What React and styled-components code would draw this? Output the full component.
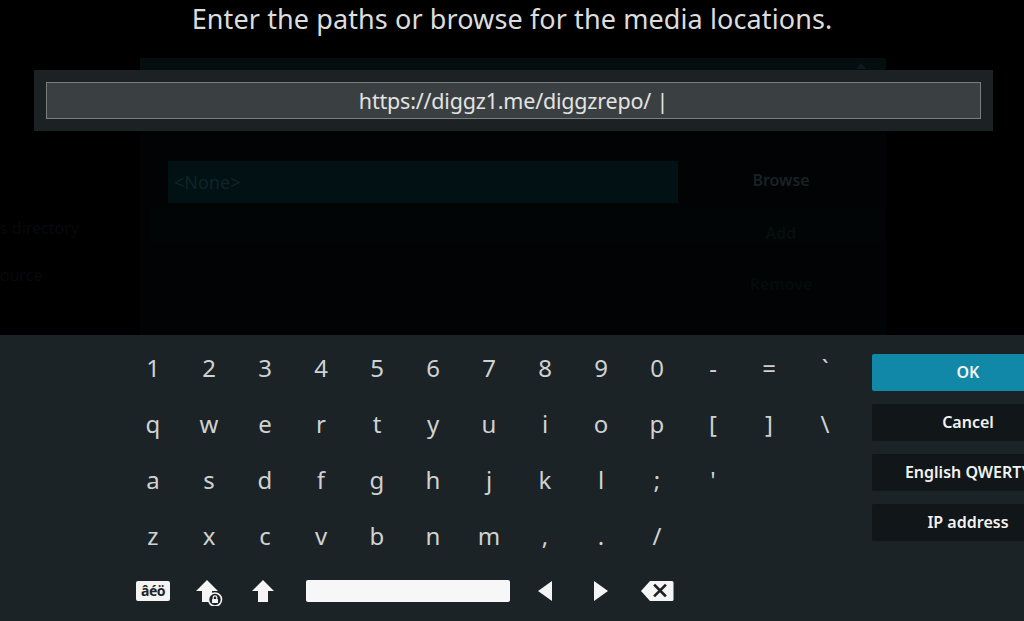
import React from "react";
import styled, { createGlobalStyle } from "styled-components";

const GlobalStyle = createGlobalStyle`
  html, body {
    margin: 0;
    padding: 0;
    background: #000;
  }
  body {
    font-family: "Noto Sans", "Open Sans", sans-serif;
  }
`;

// Screen
const Screen = styled.div`
  position: relative;
  width: 1024px;
  height: 621px;
  overflow: hidden;
  background: #000;
`;

// Dimmed window behind the keyboard
const Backdrop = styled.div`
  display: flex;
  height: 100%;
`;

const SideMenu = styled.div`
  width: 140px;
  padding-top: 216px;
  display: flex;
  flex-direction: column;
  gap: 23px;
`;

const SideLabel = styled.div`
  font-size: 16px;
  line-height: 24px;
  color: #060a0b;
  white-space: nowrap;
`;

const Dialog = styled.div`
  position: relative;
  margin-top: 58px;
  width: 746px;
  height: 320px;
  background: #010304;
  box-sizing: border-box;
  display: flex;
  flex-direction: column;
`;

const DialogHeader = styled.div`
  height: 12px;
  background: #050d0f;
`;

const ScrollMark = styled.div`
  position: absolute;
  right: 20px;
  top: 5px;
  width: 0;
  height: 0;
  border-left: 5px solid transparent;
  border-right: 5px solid transparent;
  border-bottom: 6px solid #101a1c;
`;

const DialogRow = styled.div`
  display: flex;
  align-items: center;
  height: ${(p) => p.$height}px;
  margin-top: ${(p) => p.$top || 0}px;
  margin-left: ${(p) => p.$left || 28}px;
  width: ${(p) => p.$width || 716}px;
  background: ${(p) => p.$bg || "transparent"};
`;

const PathField = styled.div`
  width: 510px;
  height: 42px;
  background: #021114;
  color: #11242a;
  font-size: 18px;
  line-height: 42px;
  padding-left: 6px;
  box-sizing: border-box;
`;

const DimAction = styled.div`
  margin-left: auto;
  width: 206px;
  text-align: center;
  font-size: 16px;
  font-weight: 600;
  color: ${(p) => p.$color || "#1b2527"};
  transform: translateY(${(p) => p.$shift || 0}px);
`;

// Keyboard overlay
const Overlay = styled.div`
  position: absolute;
  inset: 0;
  display: flex;
  flex-direction: column;
`;

const Title = styled.div`
  height: 38px;
  line-height: 38px;
  text-align: center;
  font-size: 27px;
  color: #dcdddd;
  letter-spacing: 0.1px;
`;

const InputPanel = styled.div`
  margin: 32px 31px 0 34px;
  height: 61px;
  padding: 12px;
  box-sizing: border-box;
  background: #1c2224;
`;

const InputBox = styled.div`
  height: 37px;
  box-sizing: border-box;
  border: 1px solid #7a7e7f;
  background: #3a3f41;
  color: #e2e3e3;
  font-size: 21.5px;
  line-height: 35px;
  text-align: center;
  letter-spacing: -0.2px;
`;

const Keyboard = styled.div`
  margin-top: auto;
  height: 286px;
  background: #1c2326;
  display: flex;
`;

const Keys = styled.div`
  padding: 4px 0 0 125px;
  display: flex;
  flex-direction: column;
`;

const KeyRow = styled.div`
  display: flex;
  height: 56px;
`;

const Key = styled.div`
  width: ${(p) => (p.$span || 1) * 56}px;
  height: 56px;
  display: flex;
  align-items: center;
  justify-content: center;
  font-size: 24px;
  color: #cfd2d3;
`;

const Accents = styled.div`
  width: 34px;
  height: 20px;
  border-radius: 2px;
  background: #f4f4f4;
  color: #1c2326;
  font-size: 14px;
  font-weight: 700;
  line-height: 20px;
  text-align: center;
  letter-spacing: -0.5px;
`;

const SpaceBar = styled.div`
  width: 204px;
  height: 22px;
  border-radius: 2px;
  background: #f7f7f7;
  margin-left: 6px;
`;

const Actions = styled.div`
  margin-left: 19px;
  padding-top: 19px;
  display: flex;
  flex-direction: column;
  gap: 13px;
`;

const ActionButton = styled.div`
  width: 192px;
  height: 37px;
  border-radius: 2px;
  background: ${(p) => (p.$focused ? "#1288a8" : "#111618")};
  color: #f2f2f2;
  font-size: 16px;
  font-weight: 600;
  line-height: 37px;
  text-align: center;
  white-space: nowrap;
`;

const ShiftArrow = ({ lock }) => (
  <svg width="30" height="30" viewBox="0 0 30 30">
    <path d="M13 4 L24 15 H18 V26 H8 V15 H2 Z" fill="#f5f5f5" />
    {lock && (
      <g>
        <circle cx="21" cy="23.5" r="6.5" fill="#1c2326" stroke="#f5f5f5" strokeWidth="1.6" />
        <rect x="18" y="23" width="6" height="4" rx="0.6" fill="#f5f5f5" />
        <path d="M19.2 23 V21.6 a1.8 1.8 0 0 1 3.6 0 V23" fill="none" stroke="#f5f5f5" strokeWidth="1.2" />
      </g>
    )}
  </svg>
);

const Arrow = ({ dir }) => (
  <svg width="16" height="22" viewBox="0 0 16 22">
    {dir === "left" ? (
      <path d="M15 1 V21 L1 11 Z" fill="#f5f5f5" />
    ) : (
      <path d="M1 1 V21 L15 11 Z" fill="#f5f5f5" />
    )}
  </svg>
);

const Backspace = () => (
  <svg width="34" height="22" viewBox="0 0 34 22">
    <path d="M10 1 H32 a1.5 1.5 0 0 1 1.5 1.5 V19.5 a1.5 1.5 0 0 1 -1.5 1.5 H10 L1 11 Z" fill="#f5f5f5" />
    <path d="M15 5.5 L25 15.5 M25 5.5 L15 15.5" stroke="#1c2326" strokeWidth="2.6" strokeLinecap="square" />
  </svg>
);

const rows = [
  ["1", "2", "3", "4", "5", "6", "7", "8", "9", "0", "-", "=", "`"],
  ["q", "w", "e", "r", "t", "y", "u", "i", "o", "p", "[", "]", "\\"],
  ["a", "s", "d", "f", "g", "h", "j", "k", "l", ";", "'"],
  ["z", "x", "c", "v", "b", "n", "m", ",", ".", "/"],
];

const actions = ["OK", "Cancel", "English QWERTY", "IP address"];

export default function App() {
  return (
    <Screen>
      <GlobalStyle />
      <Backdrop>
        <SideMenu>
          <SideLabel>s directory</SideLabel>
          <SideLabel>ource</SideLabel>
        </SideMenu>
        <Dialog>
          <DialogHeader />
          <ScrollMark />
          <DialogRow $height={42} $top={91}>
            <PathField>&lt;None&gt;</PathField>
            <DimAction $color="#182224" $shift={-2}>Browse</DimAction>
          </DialogRow>
          <DialogRow $height={34} $top={5} $left={10} $width={734} $bg="#020506">
            <DimAction $color="#070e10" $shift={8}>Add</DimAction>
          </DialogRow>
          <DialogRow $height={30} $top={36}>
            <DimAction $color="#050a0b" $shift={-9}>Remove</DimAction>
          </DialogRow>
        </Dialog>
      </Backdrop>

      <Overlay>
        <Title>Enter the paths or browse for the media locations.</Title>
        <InputPanel>
          <InputBox>https://diggz1.me/diggzrepo/ |</InputBox>
        </InputPanel>

        <Keyboard>
          <Keys>
            {rows.map((row, i) => (
              <KeyRow key={i}>
                {row.map((k) => (
                  <Key key={k}>{k}</Key>
                ))}
              </KeyRow>
            ))}
            <KeyRow>
              <Key>
                <Accents>âéö</Accents>
              </Key>
              <Key>
                <ShiftArrow lock />
              </Key>
              <Key>
                <ShiftArrow />
              </Key>
              <Key $span={4}>
                <SpaceBar />
              </Key>
              <Key>
                <Arrow dir="left" />
              </Key>
              <Key>
                <Arrow dir="right" />
              </Key>
              <Key>
                <Backspace />
              </Key>
            </KeyRow>
          </Keys>
          <Actions>
            {actions.map((a, i) => (
              <ActionButton key={a} $focused={i === 0}>
                {a}
              </ActionButton>
            ))}
          </Actions>
        </Keyboard>
      </Overlay>
    </Screen>
  );
}
